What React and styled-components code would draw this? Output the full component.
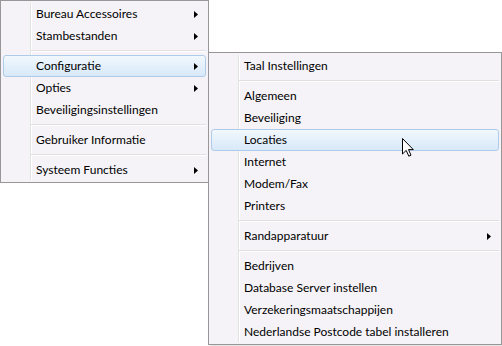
import styled, { createGlobalStyle } from "styled-components";

const GlobalStyle = createGlobalStyle`
    html, body {
        margin: 0;
        padding: 0;
        background: #ffffff;
    }
    body {
        font-family: Lato, "Noto Sans", sans-serif;
        font-size: 12px;
        color: #000000;
    }
`;

const mainItems = [
    { label: "Bureau Accessoires", sub: true },
    { label: "Stambestanden", sub: true },
    { sep: true },
    { label: "Configuratie", sub: true, active: true },
    { label: "Opties", sub: true },
    { label: "Beveiligingsinstellingen" },
    { sep: true },
    { label: "Gebruiker Informatie" },
    { sep: true },
    { label: "Systeem Functies", sub: true },
];

const configItems = [
    { label: "Taal Instellingen" },
    { sep: true },
    { label: "Algemeen" },
    { label: "Beveiliging" },
    { label: "Locaties", active: true },
    { label: "Internet" },
    { label: "Modem/Fax" },
    { label: "Printers" },
    { sep: true },
    { label: "Randapparatuur", sub: true },
    { sep: true },
    { label: "Bedrijven" },
    { label: "Database Server instellen" },
    { label: "Verzekeringsmaatschappijen" },
    { label: "Nederlandse Postcode tabel installeren" },
];

function Arrow() {
    return (
        <ArrowIcon width="4" height="7" viewBox="0 0 4 7">
            <path d="M0 0 L4 3.5 L0 7 Z" fill="#000" />
        </ArrowIcon>
    );
}

function MenuList({ items }) {
    return items.map((item, i) =>
        item.sep ? (
            <Separator key={i} />
        ) : (
            <Item key={i} $active={item.active}>
                <span>{item.label}</span>
                {item.sub && <Arrow />}
            </Item>
        )
    );
}

export default function App() {
    return (
        <>
            <GlobalStyle />
            <Stage>
                <Menu $width={209}>
                    <MenuList items={mainItems} />
                </Menu>
                <SubMenu $width={294}>
                    <MenuList items={configItems} />
                </SubMenu>
                <Cursor width="12" height="19" viewBox="0 0 12 19">
                    <path
                        d="M0.5 0.5 L0.5 16 L4.2 12.4 L6.8 18.2 L9 17.2 L6.5 11.6 L11.3 11.6 Z"
                        fill="#ffffff"
                        stroke="#000000"
                        strokeWidth="1"
                        strokeLinejoin="miter"
                    />
                </Cursor>
            </Stage>
        </>
    );
}

const Stage = styled.div`
    position: relative;
    width: 502px;
    height: 346px;
    overflow: hidden;
`;

const Menu = styled.div`
    position: relative;
    width: ${props => props.$width}px;
    box-sizing: border-box;
    padding: 2px 2px 1px 2px;
    background: #f5f3f7;
    border: 1px solid #979797;
    display: flex;
    flex-direction: column;

    &::before {
        content: "";
        position: absolute;
        top: 2px;
        bottom: 2px;
        left: 29px;
        width: 1px;
        background: #e2e3e3;
        box-shadow: 1px 0 0 #ffffff;
    }
`;

const SubMenu = styled(Menu)`
    position: absolute;
    left: 208px;
    top: 52px;
    box-shadow: 2px 2px 3px rgba(0, 0, 0, 0.12);
`;

const Item = styled.div`
    position: relative;
    z-index: 1;
    height: 22px;
    box-sizing: border-box;
    display: flex;
    align-items: center;
    justify-content: space-between;
    padding: 0 7px 0 32px;
    border: 1px solid ${props => (props.$active ? "#aecbe9" : "transparent")};
    border-radius: 3px;
    background: ${props =>
        props.$active
            ? "linear-gradient(to bottom, #f2f8fd 0%, #e4f0fb 50%, #d9e9f9 100%)"
            : "transparent"};
    white-space: nowrap;

    span {
        line-height: 20px;
    }
`;

const ArrowIcon = styled.svg`
    display: block;
    flex-shrink: 0;
`;

const Separator = styled.div`
    position: relative;
    height: 8px;
    margin-left: 28px;

    &::after {
        content: "";
        position: absolute;
        left: 0;
        right: 0;
        top: 3px;
        height: 1px;
        background: #e0e0e0;
        box-shadow: 0 1px 0 #ffffff;
    }
`;

const Cursor = styled.svg`
    position: absolute;
    left: 402px;
    top: 138px;
    z-index: 5;
`;
